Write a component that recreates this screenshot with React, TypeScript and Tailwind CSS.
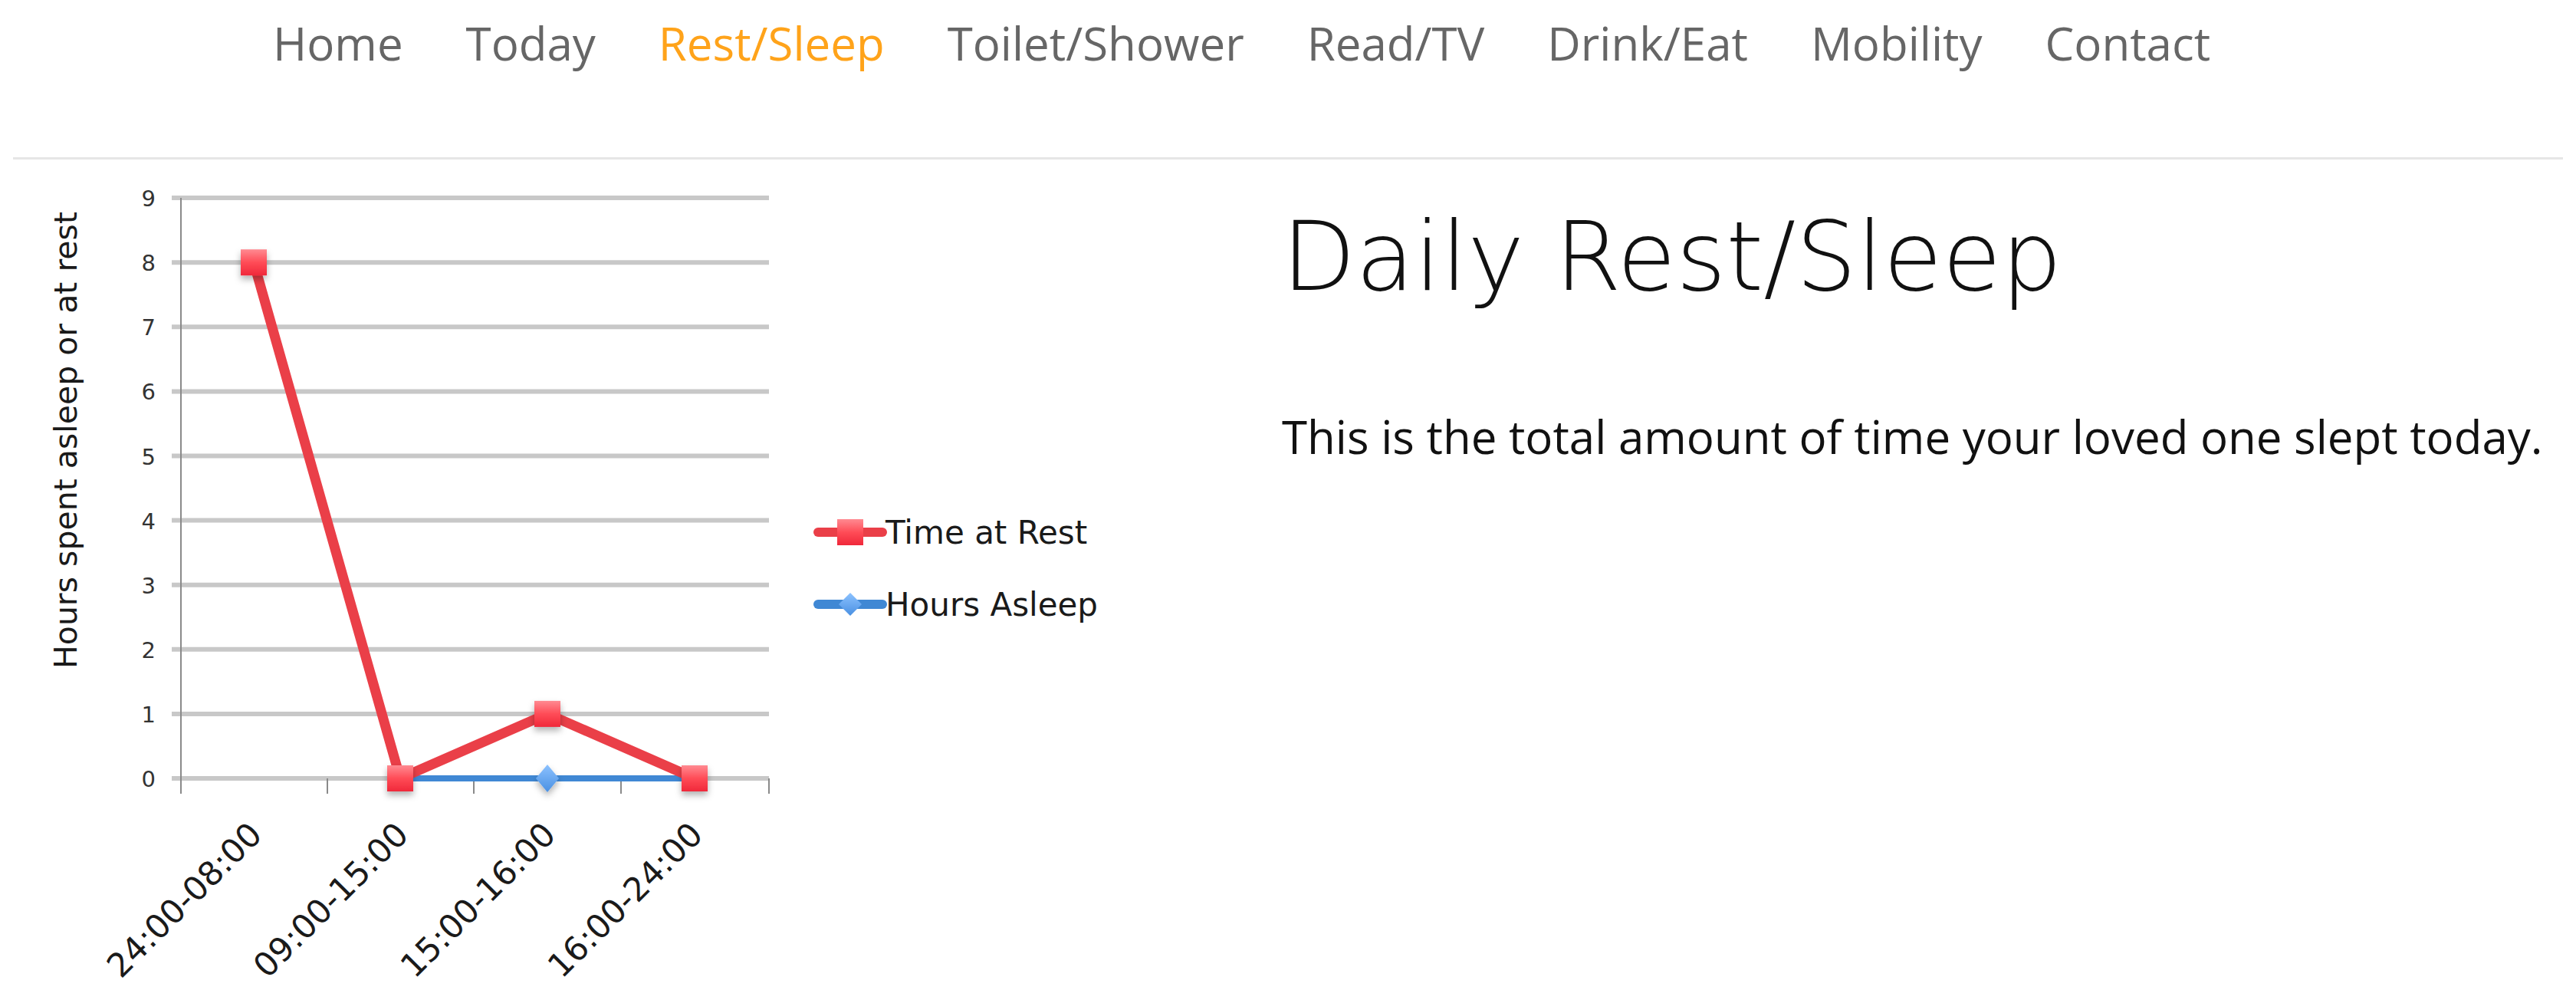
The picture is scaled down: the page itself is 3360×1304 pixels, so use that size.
const navItems = ["Home", "Today", "Rest/Sleep", "Toilet/Shower", "Read/TV", "Drink/Eat", "Mobility", "Contact"];

// chart geometry, in page pixels
const zeroY = 1014;
const step = 84.1;
const yOf = (v: number) => zeroY - v * step;
const cats = [
  { label: "24:00-08:00", x: 331, rest: 8, asleep: null as number | null },
  { label: "09:00-15:00", x: 522, rest: 0, asleep: 0 },
  { label: "15:00-16:00", x: 714, rest: 1, asleep: 0 },
  { label: "16:00-24:00", x: 906, rest: 0, asleep: 0 },
];
const ticksX = [236, 427, 618, 810, 1003];

function RestChart() {
  const restPts = cats.map((c) => `${c.x},${yOf(c.rest)}`).join(" ");
  const sleepPts = cats.filter((c) => c.asleep !== null).map((c) => `${c.x},${yOf(c.asleep as number)}`).join(" ");

  return (
    <svg width="1500" height="1097" viewBox="0 207 1500 1097" className="shrink-0" style={{ fontFamily: '"DejaVu Sans", sans-serif' }}>
      <defs>
        <linearGradient id="redMark" x1="0" y1="0" x2="0" y2="1">
          <stop offset="0" stopColor="#ff8a91" />
          <stop offset="0.5" stopColor="#ff4c57" />
          <stop offset="1" stopColor="#f0283a" />
        </linearGradient>
        <linearGradient id="blueMark" x1="0" y1="0" x2="0" y2="1">
          <stop offset="0" stopColor="#8cc2ff" />
          <stop offset="1" stopColor="#4a90e2" />
        </linearGradient>
        <filter id="shadow" x="-50%" y="-50%" width="200%" height="200%">
          <feDropShadow dx="0" dy="5" stdDeviation="4" floodColor="#000" floodOpacity="0.3" />
        </filter>
      </defs>

      {/* axis title */}
      <text transform="translate(100,573) rotate(-90)" textAnchor="middle" fontSize="41" fill="#1a1a1a">
        Hours spent asleep or at rest
      </text>

      {/* gridlines + y ticks */}
      {Array.from({ length: 10 }, (_, i) => (
        <g key={i}>
          <line x1="224" x2="1003" y1={yOf(i)} y2={yOf(i)} stroke="#c8c8c8" strokeWidth="6" />
          <text x="203" y={yOf(i) + 11} textAnchor="end" fontSize="29" fill="#333">
            {i}
          </text>
        </g>
      ))}
      <line x1="236" x2="236" y1={yOf(9)} y2="1034" stroke="#8a8a8a" strokeWidth="2" />
      {ticksX.map((x) => (
        <line key={x} x1={x} x2={x} y1={zeroY} y2="1034" stroke="#8a8a8a" strokeWidth="2" />
      ))}

      {/* x labels */}
      {cats.map((c) => (
        <text key={c.label} transform={`translate(${c.x + 13},1090) rotate(-45)`} textAnchor="end" fontSize="43" fill="#1a1a1a">
          {c.label}
        </text>
      ))}

      {/* series */}
      <polyline points={sleepPts} fill="none" stroke="#4088d4" strokeWidth="8" />
      <path d={`M714 ${zeroY - 18} L729 ${zeroY} L714 ${zeroY + 18} L699 ${zeroY} Z`} fill="url(#blueMark)" filter="url(#shadow)" />
      <polyline points={restPts} fill="none" stroke="#ea3f48" strokeWidth="13" strokeLinejoin="round" />
      {cats.map((c) => (
        <rect key={c.label} x={c.x - 17} y={yOf(c.rest) - 17} width="34" height="34" fill="url(#redMark)" filter="url(#shadow)" />
      ))}

      {/* legend */}
      <line x1="1067" x2="1151" y1="693" y2="693" stroke="#ea3f48" strokeWidth="12" strokeLinecap="round" />
      <rect x="1092" y="676" width="34" height="34" fill="url(#redMark)" />
      <text x="1155" y="708" fontSize="42" fill="#1a1a1a">
        Time at Rest
      </text>
      <line x1="1067" x2="1151" y1="787" y2="787" stroke="#4088d4" strokeWidth="12" strokeLinecap="round" />
      <path d="M1109 772 L1124 787 L1109 802 L1094 787 Z" fill="url(#blueMark)" />
      <text x="1155" y="802" fontSize="42" fill="#1a1a1a">
        Hours Asleep
      </text>
    </svg>
  );
}

export default function App() {
  return (
    <div className="min-h-screen bg-white text-[#111]" style={{ fontFamily: '"Open Sans", sans-serif' }}>
      <header className="mx-[17px] h-[208px] border-b-[3px] border-[#e6e6e6] pt-[26px]">
        <nav className="flex gap-[82px] pl-[339px]">
          {navItems.map((item) => (
            <a key={item} href="#" className={`text-[60px] leading-none ${item === "Rest/Sleep" ? "text-[#ffa31a]" : "text-[#666]"}`}>
              {item}
            </a>
          ))}
        </nav>
      </header>

      <main className="flex">
        <RestChart />
        <div className="ml-[172px] pt-[64px]">
          <h1 className="text-[125px] leading-none font-extralight" style={{ fontFamily: '"DejaVu Sans", sans-serif' }}>
            Daily Rest/Sleep
          </h1>
          <p className="mt-[142px] text-[60px] leading-none">This is the total amount of time your loved one slept today.</p>
        </div>
      </main>
    </div>
  );
}
